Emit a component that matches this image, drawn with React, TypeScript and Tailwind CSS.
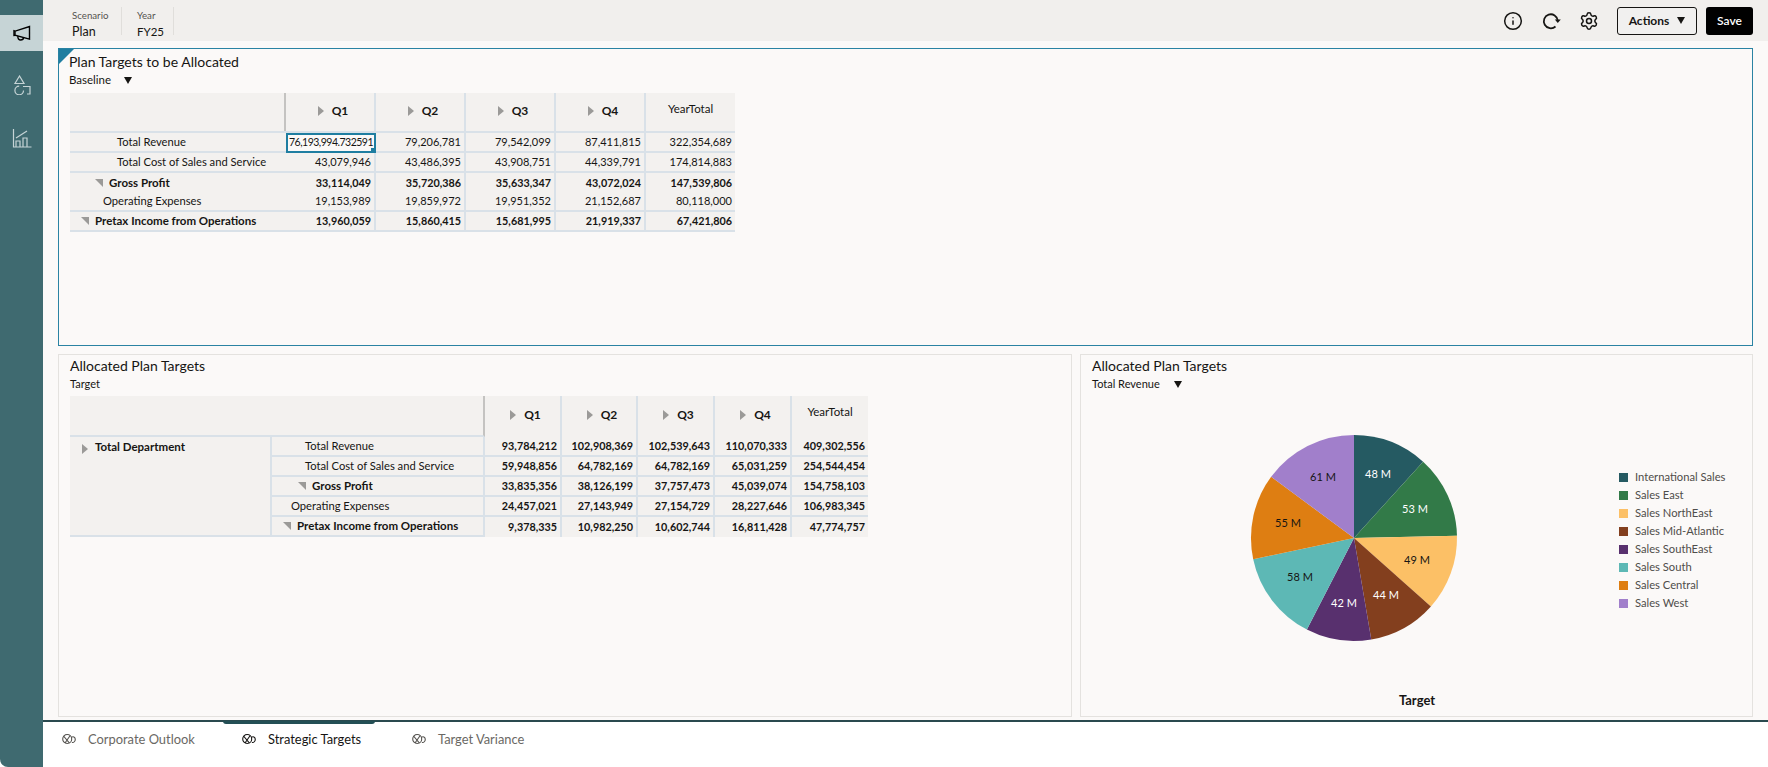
import { Info, Settings } from "lucide-react"

type Row = {
  label: string
  x: number
  bold?: boolean
  open?: boolean
  noLine?: boolean
  h?: number
  values: string[]
}

const baseline: Row[] = [
  { label: "Total Revenue", x: 47, values: ["76,193,994.732591", "79,206,781", "79,542,099", "87,411,815", "322,354,689"] },
  { label: "Total Cost of Sales and Service", x: 47, values: ["43,079,946", "43,486,395", "43,908,751", "44,339,791", "174,814,883"] },
  { label: "Gross Profit", x: 39, bold: true, open: true, noLine: true, values: ["33,114,049", "35,720,386", "35,633,347", "43,072,024", "147,539,806"] },
  { label: "Operating Expenses", x: 33, h: 19, values: ["19,153,989", "19,859,972", "19,951,352", "21,152,687", "80,118,000"] },
  { label: "Pretax Income from Operations", x: 25, bold: true, open: true, values: ["13,960,059", "15,860,415", "15,681,995", "21,919,337", "67,421,806"] },
]

const target: Row[] = [
  { label: "Total Revenue", x: 33, values: ["93,784,212", "102,908,369", "102,539,643", "110,070,333", "409,302,556"] },
  { label: "Total Cost of Sales and Service", x: 33, values: ["59,948,856", "64,782,169", "64,782,169", "65,031,259", "254,544,454"] },
  { label: "Gross Profit", x: 40, bold: true, open: true, values: ["33,835,356", "38,126,199", "37,757,473", "45,039,074", "154,758,103"] },
  { label: "Operating Expenses", x: 19, values: ["24,457,021", "27,143,949", "27,154,729", "28,227,646", "106,983,345"] },
  { label: "Pretax Income from Operations", x: 25, bold: true, open: true, values: ["9,378,335", "10,982,250", "10,602,744", "16,811,428", "47,774,757"] },
]

const slices = [
  { name: "International Sales", value: 48, color: "#255a62", text: "#ffffff", lx: 1378, ly: 475 },
  { name: "Sales East", value: 53, color: "#327a48", text: "#ffffff", lx: 1415, ly: 510 },
  { name: "Sales NorthEast", value: 49, color: "#fcc066", text: "#161513", lx: 1417, ly: 561 },
  { name: "Sales Mid-Atlantic", value: 44, color: "#833f1e", text: "#ffffff", lx: 1386, ly: 596 },
  { name: "Sales SouthEast", value: 42, color: "#58306e", text: "#ffffff", lx: 1344, ly: 604 },
  { name: "Sales South", value: 58, color: "#5db8b5", text: "#161513", lx: 1300, ly: 578 },
  { name: "Sales Central", value: 55, color: "#de7e12", text: "#161513", lx: 1288, ly: 524 },
  { name: "Sales West", value: 61, color: "#a17fcb", text: "#161513", lx: 1323, ly: 478 },
]

function pieSlices() {
  const total = slices.reduce((s, d) => s + d.value, 0)
  let acc = 0
  return slices.map((d) => {
    const a0 = (acc / total) * Math.PI * 2
    acc += d.value
    const a1 = (acc / total) * Math.PI * 2
    const x0 = 104 + 103 * Math.sin(a0)
    const y0 = 104 - 103 * Math.cos(a0)
    const x1 = 104 + 103 * Math.sin(a1)
    const y1 = 104 - 103 * Math.cos(a1)
    return { ...d, path: `M104 104 L${x0} ${y0} A103 103 0 0 1 ${x1} ${y1} Z` }
  })
}

function ArrowRight() {
  return <span className="inline-block h-0 w-0 shrink-0 border-y-[5px] border-l-[6px] border-y-transparent border-l-[#9b9a98]" />
}

function ArrowOpen() {
  return <span className="inline-block h-0 w-0 shrink-0 border-t-[8px] border-l-[8px] border-t-[#9b9a98] border-l-transparent" />
}

function Caret() {
  return <span className="inline-block h-0 w-0 border-x-[4.5px] border-t-[7px] border-x-transparent border-t-[#161513]" />
}

function QHead({ label }: { label: string }) {
  return (
    <div className="flex items-center justify-center gap-[8px] border-r-2 border-[#d9e1e8] pb-[3px] pl-[6px] text-[12px] font-bold text-[#161513]">
      <ArrowRight />
      <span>{label}</span>
    </div>
  )
}

function YearHead() {
  return <div className="flex justify-center pt-[7px] text-[11.500px] text-[#161513]">YearTotal</div>
}

function RowLabel({ row, arrowGap }: { row: Row; arrowGap: number }) {
  return (
    <div
      className={`flex items-center whitespace-nowrap text-[#161513] ${row.bold ? "text-[11.500px] font-bold" : "text-[11.200px]"} ${row.noLine ? "" : "border-b-2 border-[#d9e1e8]"}`}
      style={{ paddingLeft: row.open ? row.x - arrowGap : row.x }}
    >
      {row.open && (
        <span className="flex items-center" style={{ width: arrowGap }}>
          <ArrowOpen />
        </span>
      )}
      {row.label}
    </div>
  )
}

function Cell({ text, bold, line, last }: { text: string; bold?: boolean; line: boolean; last: boolean }) {
  return (
    <div
      className={`flex items-center justify-end overflow-hidden whitespace-nowrap pr-[3px] text-[#161513] ${bold ? "text-[10.800px] font-bold" : "text-[11px]"} ${line ? "border-b-2 border-[#d9e1e8]" : ""} ${last ? "" : "border-r-2 border-[#d9e1e8]"}`}
    >
      {text}
    </div>
  )
}

function BaselineTable() {
  return (
    <div className="mt-[6px] ml-[1px] w-[665px] bg-[#f3f1ef]">
      <div className="grid h-[40px] grid-cols-[216px_90px_90px_90px_90px_89px] border-b-2 border-[#d9e1e8]">
        <div className="border-r-2 border-[#c4c3c1]" />
        <QHead label="Q1" />
        <QHead label="Q2" />
        <QHead label="Q3" />
        <QHead label="Q4" />
        <YearHead />
      </div>
      {baseline.map((row, r) => (
        <div key={row.label} className="grid grid-cols-[216px_90px_90px_90px_90px_89px]" style={{ height: row.h ?? 20 }}>
          <RowLabel row={row} arrowGap={14} />
          {row.values.map((v, i) =>
            r === 0 && i === 0 ? (
              <div key={v} className="relative flex items-center justify-end whitespace-nowrap border-2 border-[#1f7ea1] bg-[#fbf9f8] pr-[1px] text-[10.500px] tracking-[-0.5px] text-[#161513]">
                {v}
                <span className="absolute -right-[2px] -bottom-[2px] h-[5px] w-[5px] bg-[#1f7ea1]" />
              </div>
            ) : (
              <Cell key={v} text={v} bold={row.bold} line={!row.noLine} last={i === 4} />
            )
          )}
        </div>
      ))}
    </div>
  )
}

function TargetTable() {
  return (
    <div className="mt-[5px] flex w-[798px] bg-[#f3f1ef]">
      <div className="w-[202px] shrink-0">
        <div className="h-[41px] border-b-2 border-[#d9e1e8]" />
        <div className="flex h-[100px] gap-[7px] border-r-2 border-b-2 border-[#d9e1e8] pt-[1px] pl-[12px] text-[11.500px] font-bold text-[#161513]">
          <span className="pt-[3px]"><ArrowRight /></span>
          Total Department
        </div>
      </div>
      <div className="w-[213px] shrink-0">
        <div className="h-[41px] border-r-2 border-b-2 border-r-[#c4c3c1] border-b-[#d9e1e8]" />
        {target.map((row) => (
          <div key={row.label} className="flex h-[20px] border-r-2 border-[#d9e1e8]">
            <div className="grid w-full">
              <RowLabel row={row} arrowGap={14} />
            </div>
          </div>
        ))}
      </div>
      <div className="flex-1">
        <div className="grid h-[41px] grid-cols-[77px_76px_77px_77px_76px]">
          <QHead label="Q1" />
          <QHead label="Q2" />
          <QHead label="Q3" />
          <QHead label="Q4" />
          <YearHead />
        </div>
        {target.map((row, r) => (
          <div key={row.label} className="grid h-[20px] grid-cols-[77px_76px_77px_77px_76px]">
            {row.values.map((v, i) => (
              <Cell key={v + i} text={v} bold line={r < 4} last={i === 4} />
            ))}
          </div>
        ))}
      </div>
    </div>
  )
}

function TabIcon({ dark }: { dark?: boolean }) {
  return (
    <svg width="14" height="13" viewBox="0 0 14 13" fill="none" stroke={dark ? "#161513" : "#55534f"} strokeWidth="1.1" className="shrink-0">
      <circle cx="5.200" cy="6" r="4.500" />
      <path d="M1.500 3 7.500 10.200M8.200 2.500 3 10" />
      <path d="M9.200 4.300c2-1 3.700-.5 4 1.500.3 2-1 3.900-3.300 3.700" />
    </svg>
  )
}

function Tab({ label, active, width }: { label: string; active?: boolean; width: number }) {
  return (
    <div className="flex items-center gap-[12px]" style={{ width }}>
      <TabIcon dark={active} />
      <span className={`text-[12.900px] ${active ? "text-[#161513]" : "text-[#6a6864]"}`}>{label}</span>
    </div>
  )
}

export default function App() {
  const pie = pieSlices()
  return (
    <div className="flex h-screen w-full overflow-hidden bg-white font-['Lato',sans-serif]">
      {/* side nav */}
      <div className="flex w-[43px] shrink-0 flex-col rounded-bl-lg bg-[#3f6a70] pt-[15px]">
        <div className="flex h-[36px] items-center justify-center bg-[#c6d4d6]">
          <svg width="18" height="17" viewBox="0 0 18 17" fill="none" stroke="#000" strokeWidth="1.4">
            <path d="M16.500 1.500v12.600L2 10.200V6.200z" />
            <path d="M2 6.200 1 5.800v4.600l1-.2" />
            <path d="M5 11c-.6 2.600 1 4 2.600 4 1.700 0 2.900-1 3-2.600" />
          </svg>
        </div>
        <div className="flex h-[68px] items-center justify-center">
          <svg width="18" height="20" viewBox="0 0 18 20" fill="none" stroke="#c6d4d6" strokeWidth="1.2">
            <path d="M6.500 1 2 8.500h9z" />
            <path d="M10 11.500h7V19h-3" />
            <path d="M10.500 15.500a4.300 4.300 0 1 1-4.300-4.300" />
          </svg>
        </div>
        <div className="flex h-[38px] items-center justify-center">
          <svg width="20" height="19" viewBox="0 0 20 19" fill="none" stroke="#c6d4d6" strokeWidth="1.2">
            <path d="M1.500 0v18H19.500" />
            <path d="M4 9 15 2" />
            <path d="M4 18v-6h4v6M11 18V9h4v9" />
          </svg>
        </div>
      </div>

      <div className="flex min-w-0 flex-1 flex-col">
        {/* top bar */}
        <div className="flex h-[41px] shrink-0 items-center justify-between bg-[#f1efed] pr-[15px] pl-[29px]">
          <div className="flex">
            <div className="flex h-[28px] w-[50px] flex-col border-r border-[#e0dedb] pt-[4px] leading-none">
              <span className="text-[9.700px] text-[#55534f]">Scenario</span>
              <span className="mt-[6px] text-[12.500px] text-[#161513]">Plan</span>
            </div>
            <div className="flex h-[28px] w-[52px] flex-col border-r border-[#e0dedb] pt-[4px] pl-[15px] leading-none">
              <span className="text-[9.700px] text-[#55534f]">Year</span>
              <span className="mt-[6px] text-[11.500px] text-[#161513]">FY25</span>
            </div>
          </div>
          <div className="flex items-center">
            <Info className="h-[20px] w-[20px] text-[#161513]" strokeWidth={1.8} />
            <svg width="20" height="20" viewBox="0 0 20 20" fill="none" stroke="#161513" strokeWidth="1.8" className="ml-[18px]">
              <path d="M14.500 15.500A7 7 0 1 1 16.800 9.500" />
              <path d="M13.800 8.500h6l-3 3.500z" fill="#161513" stroke="none" />
            </svg>
            <Settings className="ml-[18px] h-[20px] w-[20px] text-[#161513]" strokeWidth={1.8} />
            <button className="ml-[18px] flex h-[28px] w-[80px] items-center justify-center gap-[8px] rounded-[3px] border border-[#161513] bg-[#f1f0ef] text-[12px] font-bold text-[#161513]">
              Actions
              <Caret />
            </button>
            <button className="ml-[9px] h-[28px] w-[47px] rounded-[3px] bg-black text-[12px] font-semibold text-white">Save</button>
          </div>
        </div>

        {/* panels */}
        <div className="flex min-h-0 flex-1 flex-col bg-[#fbf9f8] pt-[7px] pr-[15px] pb-[3px] pl-[15px]">
          <div className="relative h-[298px] shrink-0 border border-[#2a83a3] pl-[10px] pt-[3px]">
            <span className="absolute top-0 left-0 h-0 w-0 border-t-[15px] border-r-[15px] border-t-[#1f7ea1] border-r-transparent" />
            <div className="text-[14px] leading-[20px] text-[#161513]">Plan Targets to be Allocated</div>
            <div className="mt-[1px] flex items-center gap-[13px] text-[11.500px] leading-[14px] text-[#161513]">
              Baseline
              <Caret />
            </div>
            <BaselineTable />
          </div>

          <div className="mt-[8px] flex min-h-0 flex-1 gap-[8px]">
            <div className="w-[1014px] shrink-0 border border-[#e4e2df] pl-[11px] pt-[1px]">
              <div className="text-[14px] leading-[20px] text-[#161513]">Allocated Plan Targets</div>
              <div className="mt-[1px] text-[11px] leading-[14px] text-[#161513]">Target</div>
              <TargetTable />
            </div>

            <div className="flex min-w-0 flex-1 flex-col border border-[#e4e2df] pl-[11px] pt-[1px]">
              <div className="text-[14px] leading-[20px] text-[#161513]">Allocated Plan Targets</div>
              <div className="mt-[1px] flex items-center gap-[14px] text-[11px] leading-[14px] text-[#161513]">
                Total Revenue
                <Caret />
              </div>
              <div className="mt-[43px] flex">
                <svg width="208" height="208" viewBox="0 0 208 208" className="ml-[158px] shrink-0">
                  {pie.map((s) => (
                    <path key={s.name} d={s.path} fill={s.color} />
                  ))}
                  {pie.map((s) => (
                    <text key={s.name} x={s.lx - 1354 + 104} y={s.ly - 538 + 104} fill={s.text} fontSize="11" textAnchor="middle" dominantBaseline="middle">
                      {s.value} M
                    </text>
                  ))}
                </svg>
                <div className="mt-[34px] ml-[161px] flex flex-col">
                  {pie.map((s) => (
                    <div key={s.name} className="flex h-[18px] items-center gap-[7px] text-[11.200px] text-[#4f4d4a]">
                      <span className="h-[9px] w-[9px] shrink-0" style={{ backgroundColor: s.color }} />
                      {s.name}
                    </div>
                  ))}
                </div>
              </div>
              <div className="mt-[49px] w-[650px] text-center text-[13px] font-bold text-[#161513]">Target</div>
            </div>
          </div>
        </div>

        {/* bottom tabs */}
        <div className="relative flex h-[47px] shrink-0 items-center border-t-2 border-[#2a4a4f] bg-white pb-[10px] pl-[19px]">
          <span className="absolute -top-[1px] left-[180px] h-[3px] w-[152px] rounded-b-[3px] bg-[#234f55]" />
          <Tab label="Corporate Outlook" width={180} />
          <Tab label="Strategic Targets" active width={170} />
          <Tab label="Target Variance" width={160} />
        </div>
      </div>
    </div>
  )
}
